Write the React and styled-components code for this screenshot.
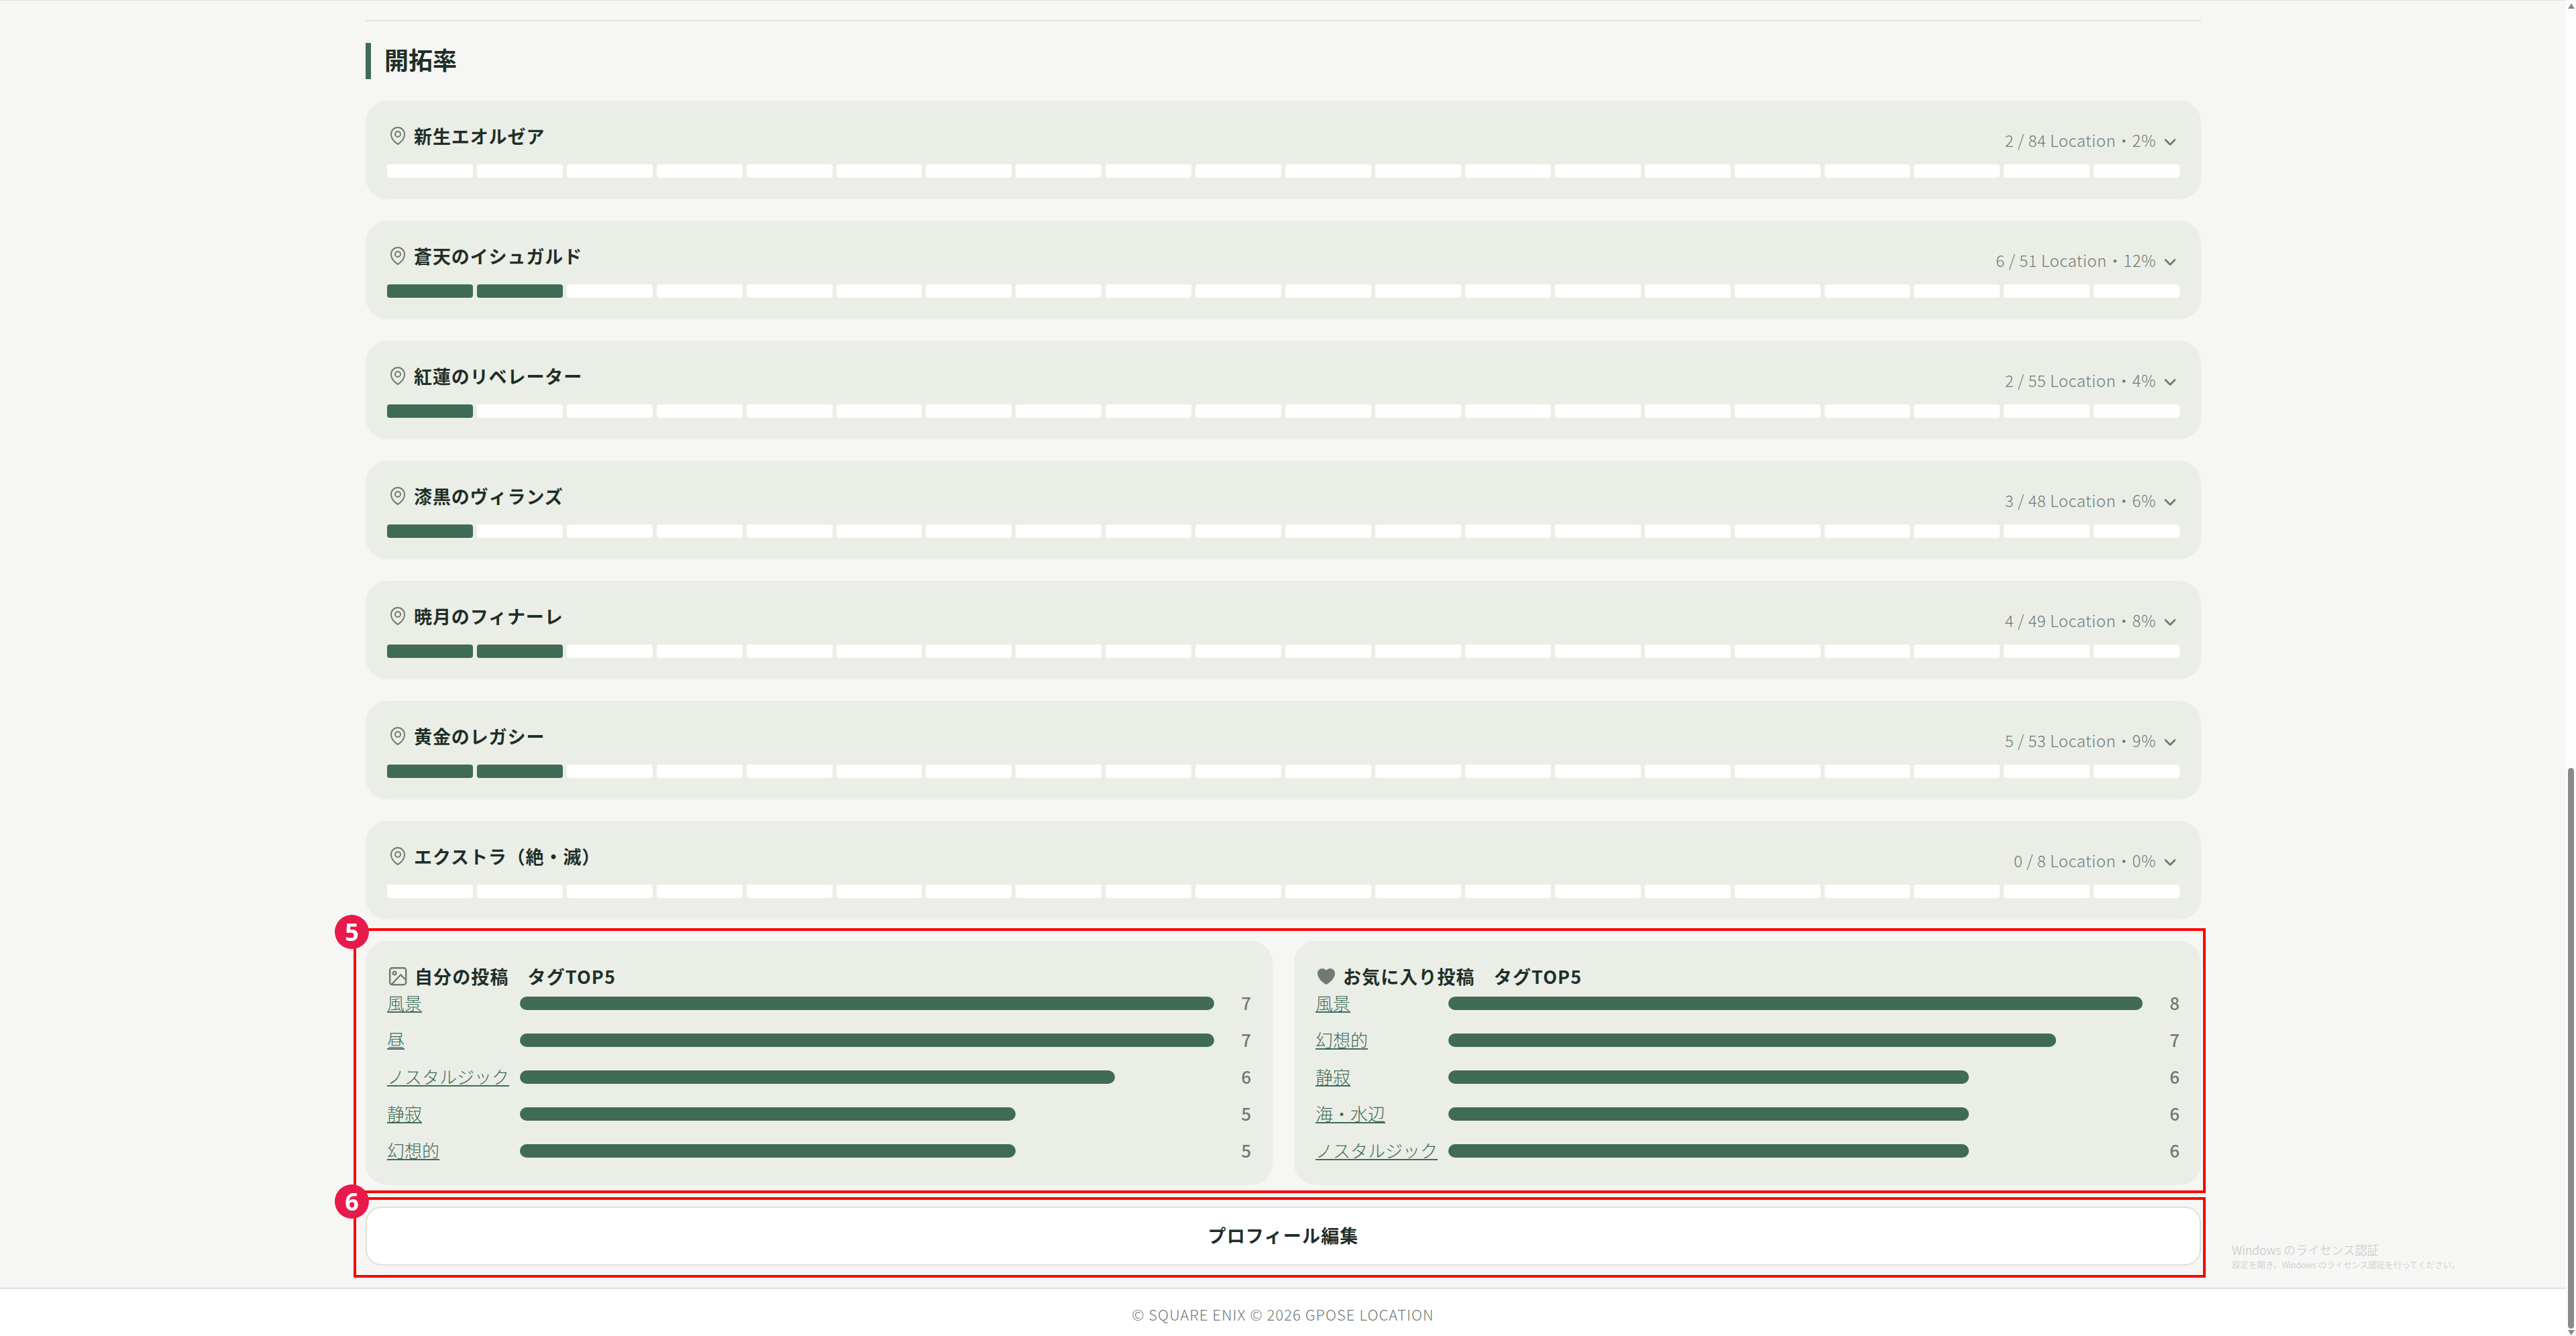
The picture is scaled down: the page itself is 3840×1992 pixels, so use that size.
import React from "react";
import styled, { createGlobalStyle } from "styled-components";
import { ChevronDown } from "lucide-react";
import { HiOutlineMapPin, HiHeart } from "react-icons/hi2";

const GREEN = "#3f6b57";
const INK = "#1f2f28";
const MUTED = "#6f7a72";
const CARD = "#ebeee7";

const regions = [
	{ name: "新生エオルゼア", meta: "2 / 84 Location・2%", filled: 0 },
	{ name: "蒼天のイシュガルド", meta: "6 / 51 Location・12%", filled: 2 },
	{ name: "紅蓮のリベレーター", meta: "2 / 55 Location・4%", filled: 1 },
	{ name: "漆黒のヴィランズ", meta: "3 / 48 Location・6%", filled: 1 },
	{ name: "暁月のフィナーレ", meta: "4 / 49 Location・8%", filled: 2 },
	{ name: "黄金のレガシー", meta: "5 / 53 Location・9%", filled: 2 },
	{ name: "エクストラ（絶・滅）", meta: "0 / 8 Location・0%", filled: 0 },
];

const myTags = [
	{ name: "風景", count: 7 },
	{ name: "昼", count: 7 },
	{ name: "ノスタルジック", count: 6 },
	{ name: "静寂", count: 5 },
	{ name: "幻想的", count: 5 },
];

const favTags = [
	{ name: "風景", count: 8 },
	{ name: "幻想的", count: 7 },
	{ name: "静寂", count: 6 },
	{ name: "海・水辺", count: 6 },
	{ name: "ノスタルジック", count: 6 },
];

const GlobalStyle = createGlobalStyle`
	html, body {
		margin: 0;
		padding: 0;
		height: 1992px;
		overflow: hidden;
		background: #f6f6f4;
		font-family: "Noto Sans CJK JP", "Noto Sans", sans-serif;
	}
	* {
		box-sizing: border-box;
	}
`;

const Page = styled.div`
	position: relative;
	display: flex;
	width: 3840px;
	height: 1992px;
	overflow: hidden;
`;

const Main = styled.div`
	flex: 1;
	display: flex;
	flex-direction: column;
	border-top: 1px solid #e2e2e0;
	background: #f6f6f4;
`;

const Content = styled.main`
	flex: 1;
	padding: 29px 544px 32px 545px;
`;

const Rule = styled.hr`
	margin: 0;
	height: 2px;
	border: 0;
	background: #dfe5da;
`;

const SectionTitle = styled.h2`
	margin: 32px 0;
	padding: 0 0 4px 20px;
	height: 54px;
	border-left: 8px solid ${GREEN};
	font-size: 36px;
	line-height: 48px;
	font-weight: 600;
	color: ${INK};
`;

const RegionList = styled.div`
	display: flex;
	flex-direction: column;
	gap: 32px;
`;

const Card = styled.section`
	padding: 32px;
	border-radius: 32px;
	background: ${CARD};
`;

const RegionHead = styled.div`
	display: flex;
	justify-content: space-between;
	align-items: flex-start;
	height: 46px;
	margin-bottom: 17px;
`;

const RegionName = styled.div`
	display: flex;
	align-items: center;
	gap: 8px;
	height: 40px;
	font-size: 27px;
	font-weight: 700;
	letter-spacing: 0.9px;
	color: ${INK};
	svg {
		color: ${MUTED};
		flex: none;
	}
`;

const RegionMeta = styled.div`
	display: flex;
	align-items: center;
	gap: 7px;
	margin-top: 8px;
	height: 36px;
	font-size: 24px;
	font-weight: 300;
	letter-spacing: 0.5px;
	color: ${MUTED};
	svg {
		flex: none;
		margin-top: 8px;
	}
`;

const Segments = styled.div`
	display: flex;
	gap: 6px;
`;

const Segment = styled.div`
	flex: 1;
	height: 20px;
	border-radius: 4px;
	background: ${(p) => (p.$on ? GREEN : "#fff")};
`;

const TagGrid = styled.div`
	display: grid;
	grid-template-columns: 1fr 1fr;
	gap: 32px;
	margin-top: 32px;
`;

const TagTitle = styled.h3`
	display: flex;
	align-items: center;
	gap: 9px;
	margin: 0;
	height: 41px;
	font-size: 27px;
	font-weight: 700;
	letter-spacing: 1.1px;
	color: ${INK};
	white-space: pre;
	svg {
		color: ${MUTED};
		flex: none;
	}
`;

const TagRows = styled.div`
	display: flex;
	flex-direction: column;
	gap: 16px;
`;

const TagRow = styled.div`
	display: flex;
	align-items: center;
	height: 39px;
`;

const TagLink = styled.a`
	width: 198px;
	margin-top: -2px;
	font-size: 26px;
	font-weight: 300;
	color: ${GREEN};
	text-decoration: underline;
	white-space: nowrap;
`;

const TagTrack = styled.div`
	flex: 1;
`;

const TagBar = styled.div`
	height: 20px;
	border-radius: 10px;
	background: ${GREEN};
`;

const TagCount = styled.div`
	width: 55px;
	margin-top: -2px;
	text-align: right;
	font-size: 26px;
	font-weight: 500;
	color: ${MUTED};
`;

const EditButton = styled.button`
	display: block;
	width: 100%;
	height: 88px;
	margin-top: 32px;
	padding: 0 0 3px;
	border: 2px solid #dde2da;
	border-radius: 24px;
	background: #fff;
	font-family: inherit;
	font-size: 27px;
	font-weight: 700;
	letter-spacing: 1.2px;
	color: ${INK};
`;

const Footer = styled.footer`
	height: 72px;
	padding-top: 3px;
	display: flex;
	align-items: center;
	justify-content: center;
	border-top: 2px solid #dfe3dc;
	background: #fff;
	font-size: 22px;
	font-weight: 300;
	letter-spacing: 1.05px;
	color: ${MUTED};
`;

const Scrollbar = styled.aside`
	position: relative;
	flex: none;
	width: 15px;
	background: #fdfdfd;
`;

const ScrollThumb = styled.div`
	position: absolute;
	left: 3px;
	top: 1145px;
	bottom: 11px;
	width: 9px;
	border-radius: 5px;
	background: #8a8a8a;
`;

const ScrollArrow = styled.div`
	position: absolute;
	left: 3px;
	${(p) => (p.$down ? "bottom: 1px;" : "top: 5px;")}
	border-left: 5px solid transparent;
	border-right: 5px solid transparent;
	${(p) => (p.$down ? "border-top" : "border-bottom")}: 8px solid #8a8a8a;
`;

const Frame = styled.div`
	position: absolute;
	left: 527px;
	width: 2761px;
	top: ${(p) => p.$top}px;
	height: ${(p) => p.$height}px;
	border: 4px solid #ff0000;
	pointer-events: none;
`;

const Badge = styled.div`
	position: absolute;
	left: 499px;
	top: ${(p) => p.$top}px;
	width: 51px;
	height: 51px;
	display: flex;
	align-items: center;
	justify-content: center;
	border-radius: 50%;
	background: #e8194b;
	font-family: "Noto Sans", sans-serif;
	font-size: 36px;
	font-weight: 700;
	color: #fff;
`;

const Watermark = styled.div`
	position: absolute;
	left: 3327px;
	top: 1851px;
	color: #c2c2c0;
	font-weight: 300;
`;

const WatermarkTitle = styled.div`
	font-size: 17.8px;
	line-height: 24px;
`;

const WatermarkText = styled.div`
	font-size: 12.5px;
	line-height: 22px;
`;

const ImageIcon = () => (
	<svg width="32" height="32" viewBox="0 0 32 32" fill="none" stroke="currentColor" strokeWidth="2.4">
		<rect x="4.2" y="3.2" width="24" height="25" rx="3.5" />
		<circle cx="11" cy="11" r="2.4" />
		<path d="M6.5 28 20.3 13.5 28 21" />
	</svg>
);

const Region = ({ name, meta, filled }) => (
	<Card>
		<RegionHead>
			<RegionName>
				<HiOutlineMapPin size={32} />
				{name}
			</RegionName>
			<RegionMeta>
				{meta}
				<ChevronDown size={28} strokeWidth={2.4} />
			</RegionMeta>
		</RegionHead>
		<Segments>
			{Array.from({ length: 20 }, (_, i) => (
				<Segment key={i} $on={i < filled} />
			))}
		</Segments>
	</Card>
);

const TagCard = ({ icon, title, tags }) => {
	const max = Math.max(...tags.map((t) => t.count));
	return (
		<Card>
			<TagTitle>
				{icon}
				<span>{title}</span>
			</TagTitle>
			<TagRows>
				{tags.map((t) => (
					<TagRow key={t.name}>
						<TagLink href="#">{t.name}</TagLink>
						<TagTrack>
							<TagBar style={{ width: `${(t.count / max) * 100}%` }} />
						</TagTrack>
						<TagCount>{t.count}</TagCount>
					</TagRow>
				))}
			</TagRows>
		</Card>
	);
};

export default function App() {
	return (
		<Page>
			<GlobalStyle />
			<Main>
				<Content>
					<Rule />
					<SectionTitle>開拓率</SectionTitle>
					<RegionList>
						{regions.map((r) => (
							<Region key={r.name} {...r} />
						))}
					</RegionList>
					<TagGrid>
						<TagCard icon={<ImageIcon />} title="自分の投稿　タグTOP5" tags={myTags} />
						<TagCard icon={<HiHeart size={32} />} title="お気に入り投稿　タグTOP5" tags={favTags} />
					</TagGrid>
					<EditButton>プロフィール編集</EditButton>
				</Content>
				<Footer>© SQUARE ENIX © 2026 GPOSE LOCATION</Footer>
			</Main>
			<Scrollbar>
				<ScrollArrow />
				<ScrollThumb />
				<ScrollArrow $down />
			</Scrollbar>
			<Frame $top={1384} $height={395} />
			<Frame $top={1785} $height={120} />
			<Badge $top={1364}>5</Badge>
			<Badge $top={1766}>6</Badge>
			<Watermark>
				<WatermarkTitle>Windows のライセンス認証</WatermarkTitle>
				<WatermarkText>設定を開き、Windows のライセンス認証を行ってください。</WatermarkText>
			</Watermark>
		</Page>
	);
}
